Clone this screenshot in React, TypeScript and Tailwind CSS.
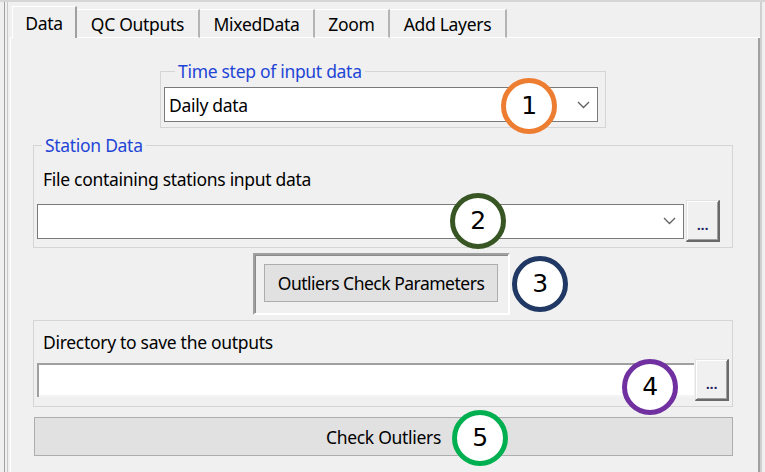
import React from "react";

const Chevron = () => (
  <svg width="13" height="8" viewBox="0 0 13 8" className="shrink-0">
    <polyline points="1,1 6.5,6.5 12,1" fill="none" stroke="#606060" strokeWidth="1.3" />
  </svg>
);

const Browse = () => (
  <button className="flex h-[42px] w-[34px] shrink-0 items-center justify-center border-t border-l border-b-2 border-r-2 border-t-[#e3e3e3] border-l-[#e3e3e3] border-b-[#696969] border-r-[#696969] bg-[#f0f0f0] pt-[8px] text-[15px] leading-none font-semibold text-[#202060] shadow-[inset_1px_1px_0_#ffffff,inset_-1px_-1px_0_#a0a0a0]">
    ...
  </button>
);

const Marker = ({ n, color, className }: { n: string; color: string; className: string }) => (
  <div
    className={`absolute flex h-[56px] w-[56px] items-center justify-center rounded-full border-[5px] bg-white font-['DejaVu_Sans',sans-serif] text-[25px] text-black ${className}`}
    style={{ borderColor: color }}
  >
    {n}
  </div>
);

const tabs = [
  { label: "QC Outputs", w: "w-[123px]" },
  { label: "MixedData", w: "w-[115px]" },
  { label: "Zoom", w: "w-[75px]" },
  { label: "Add Layers", w: "w-[117px]" },
];

export default function App() {
  return (
    <div className="relative flex h-[472px] w-[765px] overflow-hidden border-t-2 border-[#d6d6d6] bg-[#f0f0f0] pl-[4px] pr-[3px] font-['Noto_Sans',sans-serif] text-[17.5px] leading-[22px] tracking-[-0.3px] text-black">
      <div className="flex flex-1 border-l border-r-2 border-l-[#a0a0a0] border-r-[#d0d0d0] pl-[2px]">
        <div className="flex flex-1 border-l border-[#c8c8c8] pl-[2px]">
          <div className="flex flex-1 flex-col">
            {/* tab strip */}
            <div className="flex h-[36px] items-end">
              <div className="h-[1px] w-[2px] bg-white" />
              <div className="flex h-[32px] w-[65px] items-start justify-center border-t border-l border-r-2 border-t-white border-l-white border-r-[#a0a0a0] pt-[5px]">
                Data
              </div>
              {tabs.map((t) => (
                <div
                  key={t.label}
                  className={`flex h-[29px] ${t.w} items-start justify-center border-t border-r-2 border-b border-t-white border-r-[#b4b4b4] border-b-white pt-[3px]`}
                >
                  {t.label}
                </div>
              ))}
              <div className="h-[1px] flex-1 bg-white" />
            </div>

            {/* tab page */}
            <div className="flex flex-1 flex-col border-l border-r-2 border-l-white border-r-[#a0a0a0]">
              <fieldset className="mt-[22px] ml-[149px] w-[446px] border border-[#d5d5d5] px-[3px] pb-[5px] pr-[7px]">
                <legend className="ml-[11px] px-[3px] text-[#1f45d6]">Time step of input data</legend>
                <div className="mt-[5px] flex h-[35px] items-center justify-between border border-[#7a7a7a] bg-white pl-[4px] pr-[7px]">
                  <span>Daily data</span>
                  <Chevron />
                </div>
              </fieldset>

              <fieldset className="mt-[6px] ml-[22px] w-[700px] border border-[#d5d5d5] pb-[5px]">
                <legend className="ml-[8px] px-[3px] text-[#1f45d6]">Station Data</legend>
                <div className="mt-[12px] pl-[9px]">File containing stations input data</div>
                <div className="mt-[10px] flex items-center gap-[2px] pl-[3px] pr-[12px]">
                  <div className="flex h-[35px] flex-1 items-center justify-end border border-[#7a7a7a] bg-white pr-[7px]">
                    <Chevron />
                  </div>
                  <Browse />
                </div>
              </fieldset>

              <div className="mt-[5px] ml-[242px] h-[62px] w-[257px] border-2 border-t-[#a0a0a0] border-l-[#a0a0a0] border-b-white border-r-white pt-[9px] pl-[9px] shadow-[inset_1px_1px_0_#8a8a8a]">
                <button className="flex h-[38px] w-[234px] items-center justify-center border border-[#adadad] bg-[#e1e1e1] tracking-[-0.5px]">
                  Outliers Check Parameters
                </button>
              </div>

              <fieldset className="mt-[5px] ml-[22px] w-[700px] border border-[#d5d5d5] pt-[10px] pb-[5px]">
                <div className="pl-[9px]">Directory to save the outputs</div>
                <div className="mt-[6px] flex items-center gap-[1px] pl-[3px] pr-[3px]">
                  <div className="h-[34px] flex-1 border-t-2 border-l-2 border-t-[#a0a0a0] border-l-[#a0a0a0] bg-white shadow-[inset_0_-2px_0_#f4f4f4]" />
                  <Browse />
                </div>
              </fieldset>

              <button className="mt-[10px] ml-[23px] flex h-[39px] w-[699px] items-center justify-center border border-[#adadad] bg-[#e1e1e1]">
                Check Outliers
              </button>
            </div>
          </div>
        </div>
      </div>

      <Marker n="1" color="#ed7d31" className="left-[501px] top-[76px]" />
      <Marker n="2" color="#375623" className="left-[450px] top-[191px]" />
      <Marker n="3" color="#203864" className="left-[512px] top-[254px]" />
      <Marker n="4" color="#7030a0" className="left-[622px] top-[357px]" />
      <Marker n="5" color="#00b050" className="left-[452px] top-[408px]" />
    </div>
  );
}
